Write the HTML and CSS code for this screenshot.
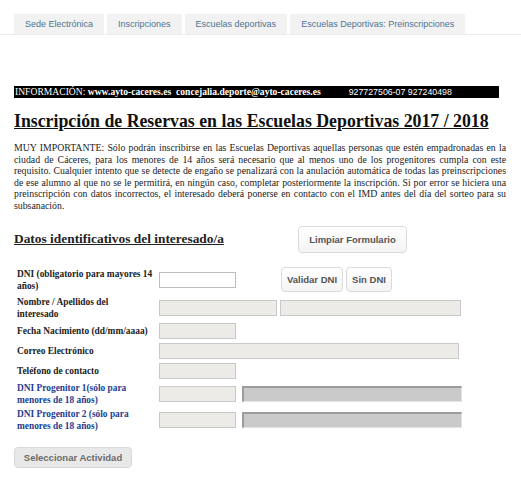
FILE: index.html
```html
<!DOCTYPE html>
<html lang="es">
<head>
<meta charset="utf-8">
<title>Inscripción de Reservas</title>
<link rel="stylesheet" href="styles.css">
</head>
<body>
<nav class="tabs">
  <a class="tab">Sede Electrónica</a>
  <a class="tab">Inscripciones</a>
  <a class="tab">Escuelas deportivas</a>
  <a class="tab">Escuelas Deportivas: Preinscripciones</a>
</nav>
<main class="page">
  <div class="info">INFORMACIÓN: <b>www.ayto-caceres.es</b>&nbsp; <b>concejalia.deporte@ayto-caceres.es</b><span class="phone">927727506-07 927240498</span></div>
  <h1 class="title">Inscripción de Reservas en las Escuelas Deportivas 2017 / 2018</h1>
  <p class="notice">MUY IMPORTANTE: Sólo podrán inscribirse en las Escuelas Deportivas aquellas personas que estén empadronadas en la ciudad de Cáceres, para los menores de 14 años será necesario que al menos uno de los progenitores cumpla con este requisito. Cualquier intento que se detecte de engaño se penalizará con la anulación automática de todas las preinscripciones de ese alumno al que no se le permitirá, en ningún caso, completar posteriormente la inscripción. Si por error se hiciera una preinscripción con datos incorrectos, el interesado deberá ponerse en contacto con el IMD antes del día del sorteo para su subsanación.</p>

  <div class="form-head">
    <h2 class="section">Datos identificativos del interesado/a</h2>
    <button class="btn btn-clear" type="button">Limpiar Formulario</button>
  </div>

  <div class="form">
    <div class="row row-dni">
      <label class="label">DNI (obligatorio para mayores 14<br>años)</label>
      <input class="field field-short field-white" type="text">
      <button class="btn btn-validate" type="button">Validar DNI</button>
      <button class="btn btn-nodni" type="button">Sin DNI</button>
    </div>
    <div class="row row-tall">
      <label class="label">Nombre / Apellidos del<br>interesado</label>
      <input class="field field-name" type="text" disabled>
      <input class="field field-surname" type="text" disabled>
    </div>
    <div class="row">
      <label class="label">Fecha Nacimiento (dd/mm/aaaa)</label>
      <input class="field field-short" type="text" disabled>
    </div>
    <div class="row">
      <label class="label">Correo Electrónico</label>
      <input class="field field-mail" type="text" disabled>
    </div>
    <div class="row">
      <label class="label">Teléfono de contacto</label>
      <input class="field field-short" type="text" disabled>
    </div>
    <div class="row row-tall">
      <label class="label label-blue">DNI Progenitor 1(sólo para<br>menores de 18 años)</label>
      <input class="field field-short" type="text" disabled>
      <input class="field field-parent" type="text" disabled>
    </div>
    <div class="row row-tall">
      <label class="label label-blue">DNI Progenitor 2 (sólo para<br>menores de 18 años)</label>
      <input class="field field-short" type="text" disabled>
      <input class="field field-parent" type="text" disabled>
    </div>
  </div>

  <button class="btn btn-select" type="button">Seleccionar Actividad</button>
</main>
</body>
</html>
```

FILE: styles.css
```css
* { box-sizing: border-box; }

body {
  margin: 0;
  background: #fff;
  color: #222;
  font-family: "Liberation Serif", "Times New Roman", serif;
}

.tabs {
  display: flex;
  gap: 3px;
  padding: 14px 0 0 14px;
  border-bottom: 1px solid #ececec;
}

.tab {
  height: 20px;
  line-height: 20px;
  padding: 0 11px;
  background: #f2f2f2;
  color: #4d7492;
  font-family: "Liberation Sans", Arial, sans-serif;
  font-size: 9px;
  white-space: nowrap;
}

.page {
  width: 506px;
  padding: 0 0 0 14px;
}

.info {
  margin-top: 51px;
  width: 485px;
  height: 12px;
  line-height: 12px;
  padding-left: 1px;
  background: #000;
  color: #fff;
  font-size: 9.6px;
  white-space: nowrap;
}

.phone {
  margin-left: 28px;
  font-family: "Liberation Sans", Arial, sans-serif;
  font-size: 8.8px;
}

.title {
  margin: 13px 0 0;
  font-size: 17.8px;
  line-height: 20px;
  font-weight: bold;
  text-decoration: underline;
  color: #111;
}

.notice {
  margin: 11px 0 0;
  font-size: 9.8px;
  line-height: 11.6px;
  text-align: justify;
  color: #222;
}

.form-head {
  display: flex;
  align-items: center;
  margin-top: 14px;
  height: 27px;
}

.section {
  width: 284px;
  margin: 0;
  font-size: 13.4px;
  font-weight: bold;
  text-decoration: underline;
  color: #222;
}

.btn {
  height: 25px;
  padding: 0;
  border: 1px solid #dadada;
  border-radius: 4px;
  background: linear-gradient(#ffffff, #f4f4f4);
  color: #555;
  font-family: "Liberation Sans", Arial, sans-serif;
  font-size: 9.5px;
  font-weight: bold;
  white-space: nowrap;
}

.btn-clear {
  width: 109px;
  height: 27px;
}

.form {
  margin-top: 13px;
  display: flex;
  flex-direction: column;
  gap: 2px;
}

.row {
  display: flex;
  align-items: center;
  height: 18px;
}

.row-dni { height: 28px; }
.row-tall { height: 24px; }

.label {
  flex: 0 0 145px;
  padding-left: 3px;
  font-size: 9.4px;
  line-height: 12px;
  font-weight: bold;
  color: #222;
}

.label-blue { color: #1e3d92; }

.field {
  height: 16px;
  border: 1px solid #c9c9c9;
  background: #ecebe7;
  padding: 0;
}

.field-white { background: #fff; border-color: #bdbdbd; }
.field-short { width: 77px; }
.field-name { width: 118px; }
.field-surname { width: 181px; margin-left: 3px; }
.field-mail { width: 300px; }

.field-parent {
  width: 220px;
  margin-left: 6px;
  background: #cacaca;
  border-width: 2px 1px 1px 2px;
  border-style: solid;
  border-color: #9c9c9c #e2e2e2 #e2e2e2 #9c9c9c;
}

.btn-validate { width: 62px; margin-left: 45px; }
.btn-nodni { width: 46px; margin-left: 3px; }

.btn-select {
  display: block;
  margin-top: 15px;
  width: 118px;
  height: 21px;
  background: #e8e8e8;
  border-color: #d8d8d8;
  color: #6b6b6b;
}
```
